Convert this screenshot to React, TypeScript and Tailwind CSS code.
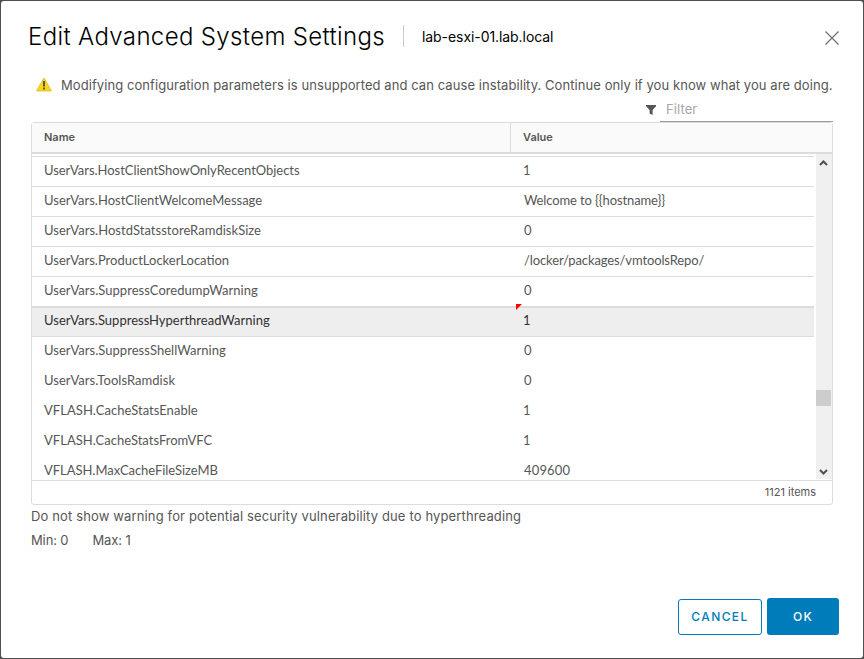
import React from "react";

type Setting = {
  name: string;
  value: string;
  nameTracking: string;
  valueTracking?: string;
  selected?: boolean;
  borderless?: boolean;
};

const settings: Setting[] = [
  { name: "UserVars.HostClientShowOnlyRecentObjects", value: "1", nameTracking: "tracking-[-0.04px]" },
  { name: "UserVars.HostClientWelcomeMessage", value: "Welcome to {{hostname}}", nameTracking: "tracking-[0px]", valueTracking: "tracking-[-0.12px]" },
  { name: "UserVars.HostdStatsstoreRamdiskSize", value: "0", nameTracking: "tracking-[0.03px]" },
  { name: "UserVars.ProductLockerLocation", value: "/locker/packages/vmtoolsRepo/", nameTracking: "tracking-[0px]", valueTracking: "tracking-[-0.12px]" },
  { name: "UserVars.SuppressCoredumpWarning", value: "0", nameTracking: "tracking-[0.04px]" },
  { name: "UserVars.SuppressHyperthreadWarning", value: "1", nameTracking: "tracking-[0px]", selected: true },
  { name: "UserVars.SuppressShellWarning", value: "0", nameTracking: "tracking-[0.04px]", borderless: true },
  { name: "UserVars.ToolsRamdisk", value: "0", nameTracking: "tracking-[0.04px]", borderless: true },
  { name: "VFLASH.CacheStatsEnable", value: "1", nameTracking: "tracking-[0.04px]", borderless: true },
  { name: "VFLASH.CacheStatsFromVFC", value: "1", nameTracking: "tracking-[0.02px]", borderless: true },
  { name: "VFLASH.MaxCacheFileSizeMB", value: "409600", nameTracking: "tracking-[-0.04px]", valueTracking: "tracking-[0.15px]", borderless: true },
];

function WarningIcon() {
  return (
    <svg className="mt-[2px] ml-[7px] block" width="18" height="15" viewBox="0 0 18 15">
      <path d="M9 0.9 L16.4 13.9 H1.6 Z" fill="#fdd80d" stroke="#e9bd3a" strokeWidth="1" strokeLinejoin="round" />
      <path d="M8 4 h2 v5.5 h-2 Z M8 10.5 h2 v2 h-2 Z" fill="#565656" />
    </svg>
  );
}

function FilterIcon() {
  return (
    <svg className="block" width="10" height="10" viewBox="0 0 10 10" fill="#565656">
      <path d="M0 0 H10 V1.2 L6.6 5 V10 L3.6 8.6 V5 L0 1.2 Z" />
    </svg>
  );
}

function Row({ s }: { s: Setting }) {
  const border = s.borderless ? "border-white" : "border-[#dcdcdc]";
  const tone = s.selected ? "bg-[#eeeeee] text-[#313131]" : "text-[#565656]";
  const cell = s.selected ? "border-t border-[#dcdcdc] leading-[24px]" : "leading-[26px]";
  const indent = s.value === "1" ? "pl-[7px]" : "pl-[8px]";
  return (
    <div className={`flex h-[30px] shrink-0 border-b text-[13px] whitespace-nowrap ${border} ${tone}`}>
      <div className={`w-[484px] pl-[12px] ${s.nameTracking} ${cell}`}>{s.name}</div>
      <div className={`relative flex-1 ${indent} ${s.valueTracking ?? ""} ${cell}`}>
        {s.selected && (
          <svg className="absolute -top-[4px] left-0 block" width="6" height="6" viewBox="0 0 6 6">
            <path d="M0 0 H6 L0 6 Z" fill="#ff0000" />
          </svg>
        )}
        {s.value}
      </div>
    </div>
  );
}

function Scrollbar() {
  return (
    <div className="ml-[2px] flex h-[325px] w-[16px] flex-col bg-[#f0f0f0]">
      <svg className="mt-[6px] ml-[3px] block shrink-0" width="9" height="6" viewBox="0 0 9 6">
        <path d="M1 5 L4.5 1.5 L8 5" fill="none" stroke="#505050" strokeWidth="2" />
      </svg>
      <div className="mt-[224px] h-[16px] w-[15px] bg-[#cdcdcd]" />
      <svg className="mt-auto mb-[4px] ml-[3px] block shrink-0" width="9" height="6" viewBox="0 0 9 6">
        <path d="M1 1 L4.5 4.5 L8 1" fill="none" stroke="#505050" strokeWidth="2" />
      </svg>
    </div>
  );
}

export default function App() {
  return (
    <div className="h-[659px] w-[864px] overflow-hidden bg-[#4f4f4f] p-px font-['Inter','Liberation_Sans',sans-serif] text-[#565656]">
      <div className="flex h-[657px] w-[862px] flex-col rounded-[3px] bg-white">
        <header className="flex h-[74px] shrink-0 items-start pl-[27px] text-black">
          <h1 className="mt-[20px] w-[375px] text-[24px] leading-[32px] font-light tracking-[0.36px] whitespace-nowrap">
            Edit Advanced System Settings
          </h1>
          <div className="mt-[24px] h-[22px] w-px bg-[#cccccc]" />
          <span className="mt-[26px] ml-[18px] text-[14px] leading-[20px] tracking-[-0.07px] whitespace-nowrap">
            lab-esxi-01.lab.local
          </span>
          <svg className="mt-[30px] mr-[24px] ml-auto block" width="14" height="14" viewBox="0 0 14 14">
            <path d="M0.5 0.5 L13.5 13.5 M13.5 0.5 L0.5 13.5" stroke="#747474" strokeWidth="1.3" fill="none" />
          </svg>
        </header>

        <div className="flex h-[24px] shrink-0 pl-[27px]">
          <WarningIcon />
          <p className="ml-[8px] text-[13px] leading-[20px] tracking-[0.07px] whitespace-nowrap">
            Modifying configuration parameters is unsupported and can cause instability. Continue only if you know what you are doing.
          </p>
        </div>

        <div className="flex h-[23px] shrink-0 justify-end pr-[30px]">
          <div className="mt-[6px] mr-[4px]">
            <FilterIcon />
          </div>
          <div className="h-[23px] w-[173px] border-b border-[#9a9a9a] pl-[6px] text-[13px] leading-[21px] tracking-[0.1px] text-[#a6a6a6]">
            Filter
          </div>
        </div>

        <section className="ml-[30px] flex h-[383px] w-[802px] shrink-0 flex-col rounded-[3px] border border-[#dcdcdc]">
          <div className="flex h-[31px] shrink-0 border-b-2 border-[#dcdcdc] bg-[#fafafa] text-[11px] leading-[28px] font-semibold">
            <div className="w-[479px] border-r border-[#dcdcdc] pl-[12px]">Name</div>
            <div className="pl-[12px]">Value</div>
          </div>
          <div className="flex h-[326px] shrink-0 overflow-hidden">
            <div className="flex w-[782px] flex-col pt-[2px] font-['Lato','Liberation_Sans',sans-serif]">
              <div className="h-px shrink-0 bg-[#dcdcdc]" />
              {settings.map((s) => (
                <Row key={s.name} s={s} />
              ))}
            </div>
            <Scrollbar />
          </div>
          <div className="flex h-[24px] shrink-0 justify-end border-t border-[#dcdcdc] pr-[16px] text-[11px] leading-[22px]">
            1121 items
          </div>
        </section>

        <div className="shrink-0 pl-[30px] text-[13px] whitespace-nowrap">
          <p className="h-[24px] leading-[22px] tracking-[0.14px]">
            Do not show warning for potential security vulnerability due to hyperthreading
          </p>
          <div className="flex gap-[24px] leading-[22px] tracking-[-0.12px]">
            <span>Min: 0</span>
            <span>Max: 1</span>
          </div>
        </div>

        <footer className="mt-auto flex items-end justify-end gap-[5px] pr-[24px] pb-[23px] text-[12px] font-medium">
          <button className="h-[36px] w-[84px] rounded-[3px] border border-[#007cbb] tracking-[1.4px] text-[#007cbb]">CANCEL</button>
          <button className="h-[37px] w-[72px] rounded-[3px] bg-[#007cbb] tracking-[1.2px] text-white">OK</button>
        </footer>
      </div>
    </div>
  );
}
